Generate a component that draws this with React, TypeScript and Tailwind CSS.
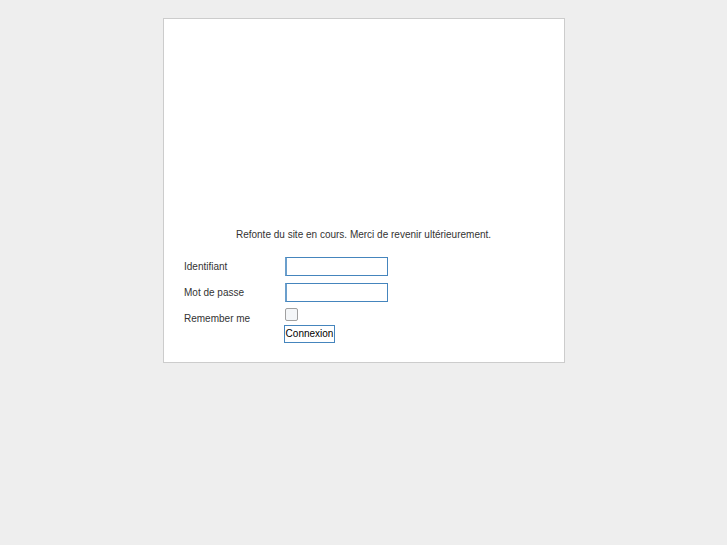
export default function App() {
  return (
    <div className="min-h-[545px] bg-[#eeeeee] pt-[18px] font-['Liberation_Sans',Arial,sans-serif] text-[10px] text-[#333]">
      <div className="ml-[163px] w-[402px] h-[345px] border border-[#cccccc] bg-white">
        <p className="mt-[209px] text-center leading-[14px] pr-[1px]">
          Refonte du site en cours. Merci de revenir ultérieurement.
        </p>
        <div className="mt-[11px] ml-[20px] flex flex-col">
          <div className="flex items-center h-[26px]">
            <label className="w-[101px]">Identifiant</label>
            <input className="w-[103px] h-[19px] border border-[#4585bd] border-l-2 border-l-[#6b9fcc] bg-white outline-none" />
          </div>
          <div className="flex items-center h-[26px]">
            <label className="w-[101px]">Mot de passe</label>
            <input type="password" className="w-[103px] h-[19px] border border-[#4585bd] border-l-2 border-l-[#6b9fcc] bg-white outline-none" />
          </div>
          <div className="flex items-start h-[17px] mt-[3px]">
            <label className="w-[101px] pt-[3px]">Remember me</label>
            <span className="w-[13px] h-[13px] border border-[#a0a0a0] rounded-[2px] bg-[#f4f6f8]" />
          </div>
          <div className="flex">
            <span className="w-[100px]" />
            <button className="h-[18px] w-[51px] border border-[#4585bd] bg-white text-black text-[10px] leading-none">
              Connexion
            </button>
          </div>
        </div>
      </div>
    </div>
  );
}
